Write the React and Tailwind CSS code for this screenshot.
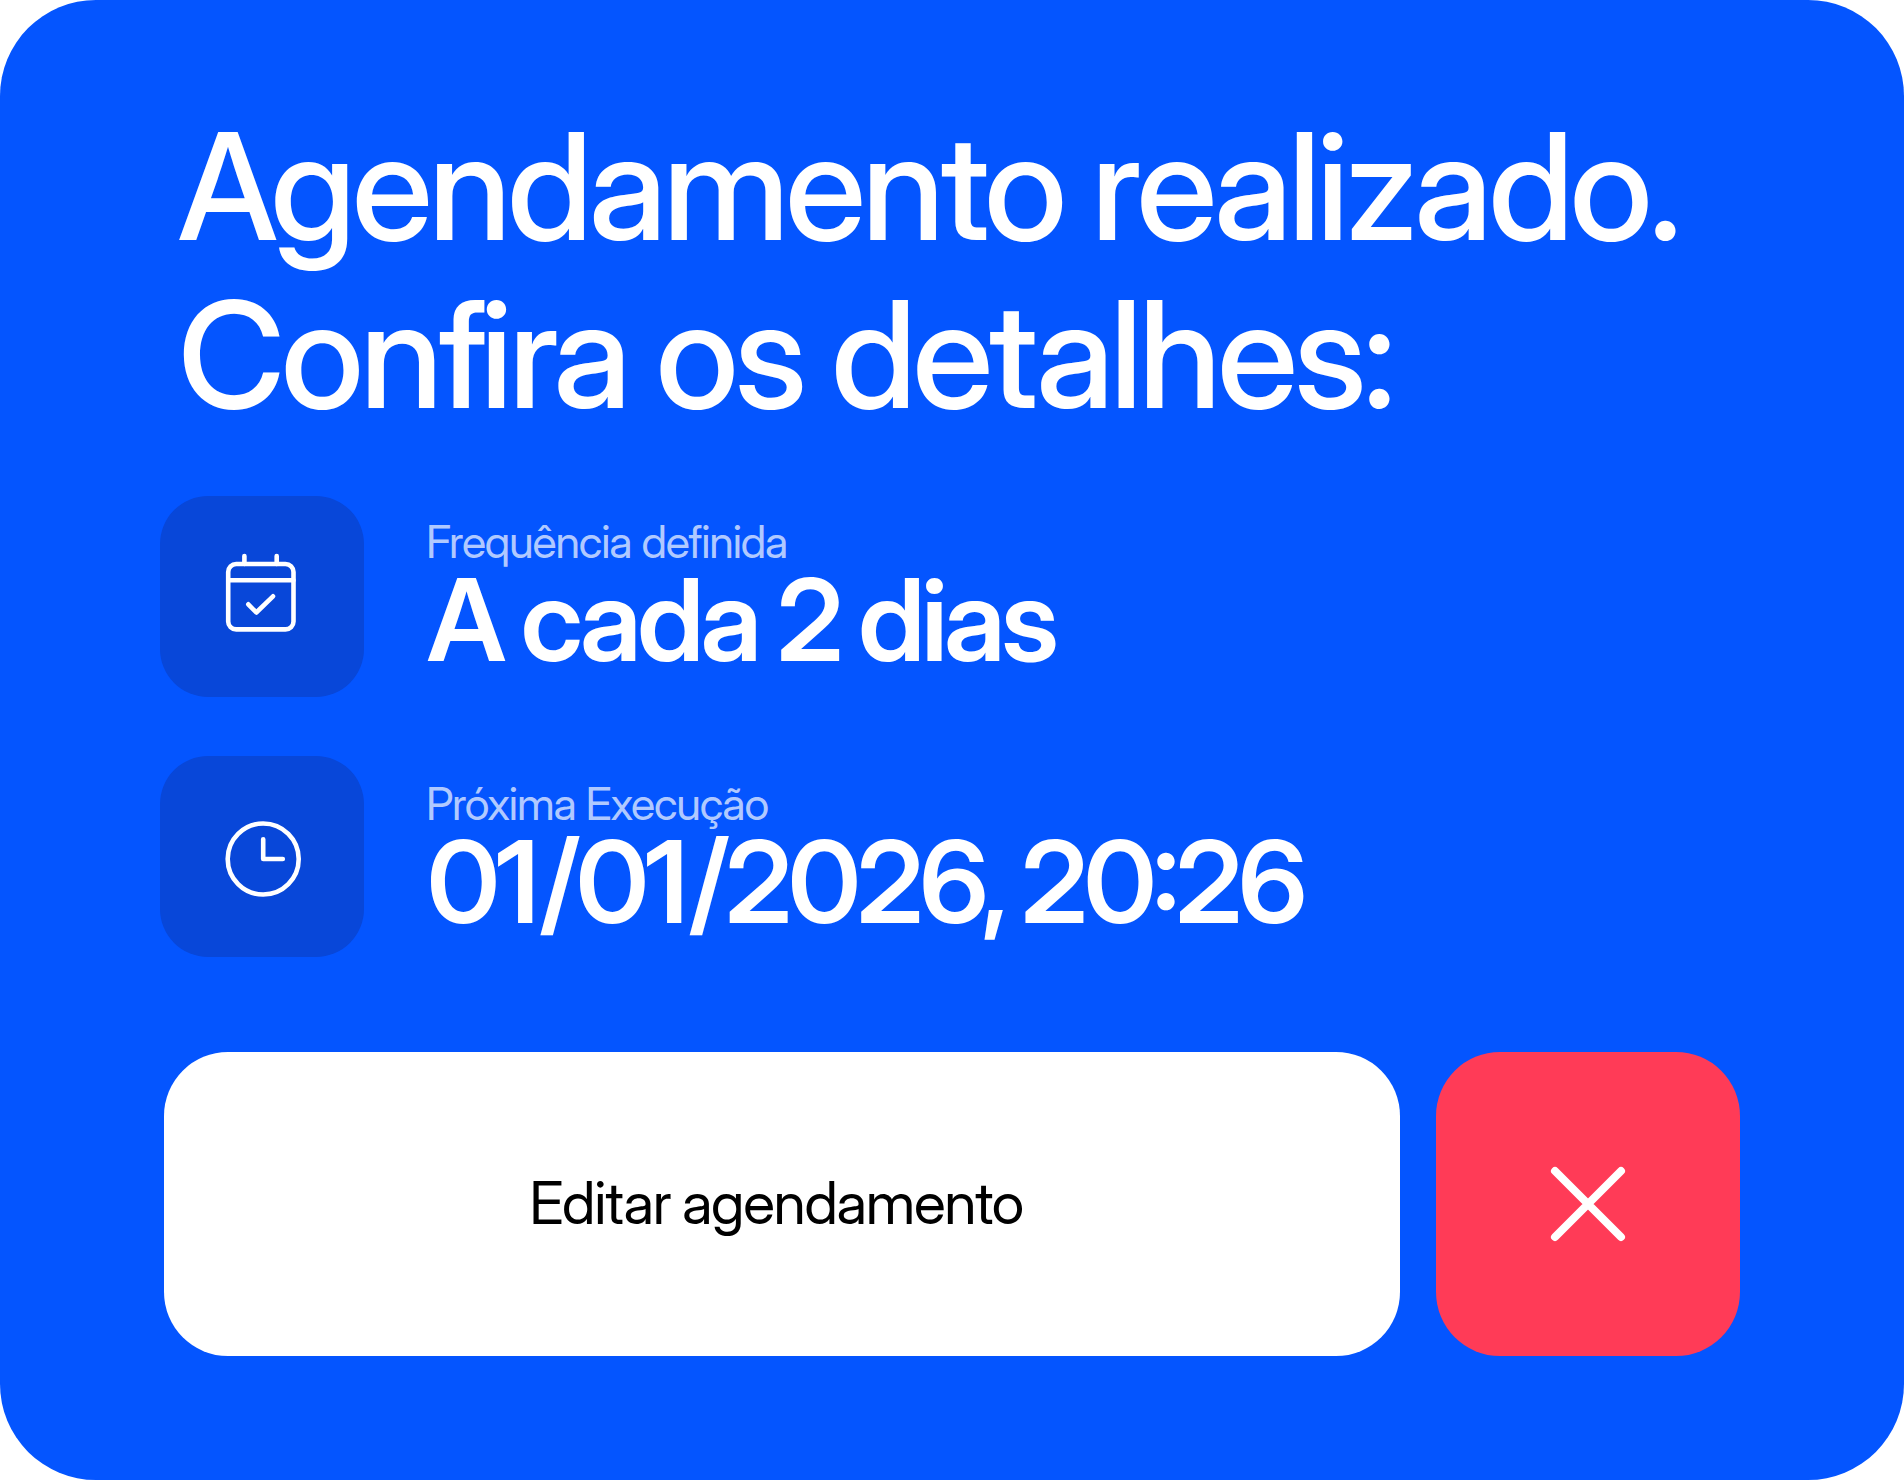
import React from 'react';

const CalendarIcon = () => (
  <svg width="204" height="201" viewBox="0 0 204 201" fill="none" stroke="white" strokeWidth="4.6" strokeLinecap="round" strokeLinejoin="round">
    <rect x="68.2" y="68" width="65.3" height="65.4" rx="8" />
    <path d="M68.2 84.3h65.3M84.4 60v8M116.7 60v8M88.3 108.3l8 8.2 16.7-16.2" />
  </svg>
);

const ClockIcon = () => (
  <svg width="204" height="201" viewBox="0 0 204 201" fill="none" stroke="white" strokeWidth="4.6" strokeLinecap="round" strokeLinejoin="round">
    <circle cx="103.2" cy="103" r="35.5" />
    <path d="M103.2 83.2V103h19.6" />
  </svg>
);

const Slash = () => <span className="ml-[5px]">/</span>;

const DetailRow = ({ icon: Icon, label, className, children }) => (
  <div className="flex h-[201px]">
    <div className="w-[204px] h-[201px] rounded-[48px] bg-[#0847d9]">
      <Icon />
    </div>
    <div className={`ml-[62px] whitespace-nowrap ${className}`}>
      <p className="text-[45px] leading-[54px] tracking-[-1.2px] text-white/70">{label}</p>
      <p className="ml-[1px] mt-[1px] text-[114px] leading-[100px] font-semibold tracking-[-4px] [word-spacing:-3px]">{children}</p>
    </div>
  </div>
);

export default function App() {
  return (
    <div className="w-[1904px] h-[1480px] bg-white font-['Inter_Display','Inter',sans-serif] [font-feature-settings:'calt']">
      <main className="w-full h-full rounded-[96px] bg-[#0455ff] text-white pt-[103px] pl-[160px] overflow-hidden">
        <h1 className="ml-[18px] h-[393px] text-[148px] leading-[168px] font-medium tracking-[-4px] [word-spacing:-3px] whitespace-nowrap">
          Agendamento realizado.
          <br />
          Con<span className="tracking-[-7px]">f</span>ira os detalhes:
        </h1>
        <section className="space-y-[59px]">
          <DetailRow icon={CalendarIcon} label="Frequência definida" className="pt-[19px]">
            A cada 2 dias
          </DetailRow>
          <DetailRow icon={ClockIcon} label="Próxima Execução" className="pt-[21px]">
            01<Slash />01<Slash />2026, 20:26
          </DetailRow>
        </section>
        <div className="flex gap-[36px] mt-[95px] pl-[4px]">
          <button className="w-[1236px] h-[304px] rounded-[64px] bg-white text-black text-[59px] tracking-[-1.3px] [word-spacing:-2px] pr-[12px] pb-[1px]">
            Editar agendamento
          </button>
          <button className="w-[304px] h-[304px] rounded-[64px] bg-[#ff3b57] flex items-center justify-center">
            <svg width="80" height="80" viewBox="0 0 80 80" fill="none" stroke="white" strokeWidth="8" strokeLinecap="round">
              <path d="M7 7l66 66M73 7L7 73" />
            </svg>
          </button>
        </div>
      </main>
    </div>
  );
}
